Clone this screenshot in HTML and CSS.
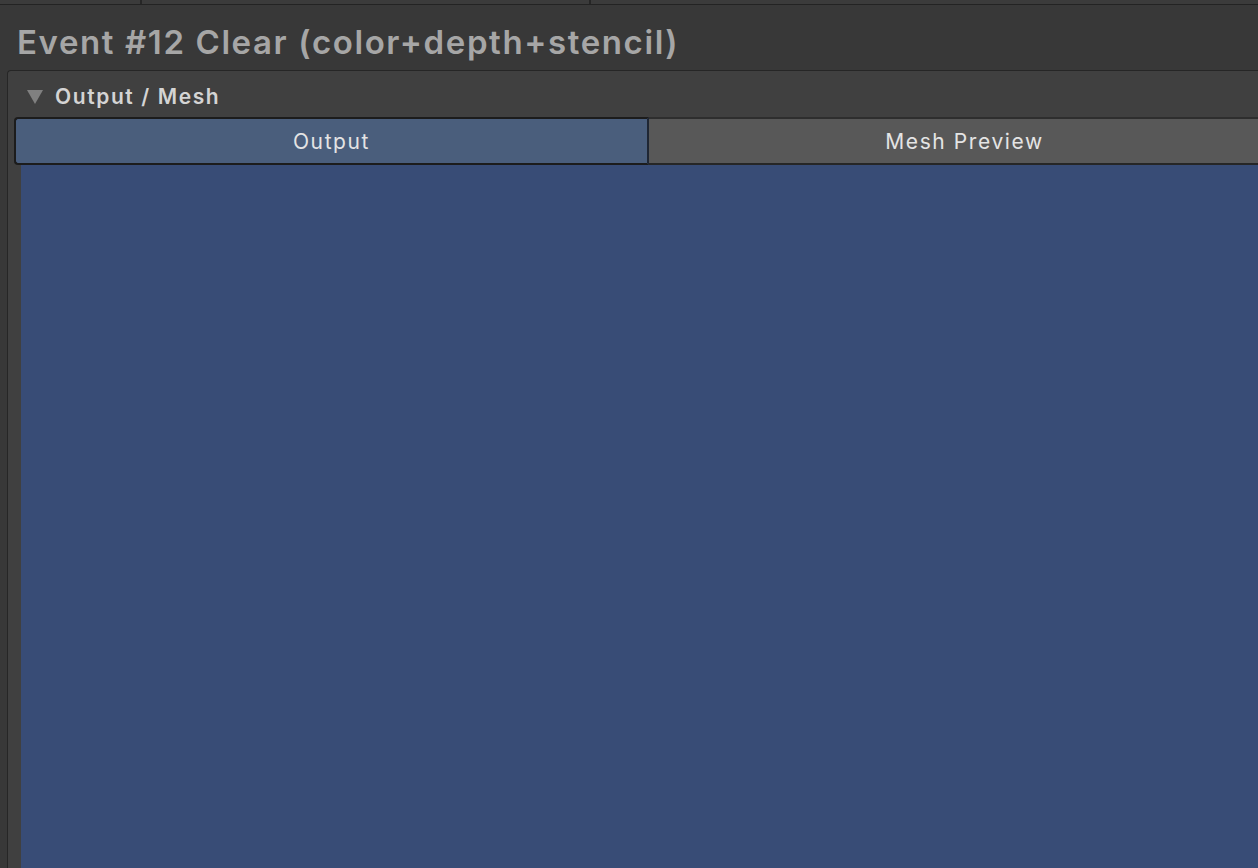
FILE: index.html
```html
<!DOCTYPE html>
<html>
<head>
<meta charset="utf-8">
<link rel="stylesheet" href="styles.css">
</head>
<body>
<div class="topbar">
  <div class="toptab t1"></div>
  <div class="toptab t2"></div>
  <div class="toptab t3"></div>
</div>
<h1 class="title">Event #12 Clear (color+depth+stencil)</h1>
<section class="panel">
  <div class="foldout">
    <svg class="arrow" width="18" height="16" viewBox="0 0 18 16"><polygon points="1,1 17,1 9,15" fill="#808080"/></svg>
    <span class="foldout-label">Output / Mesh</span>
  </div>
  <div class="tabs">
    <div class="tab active">Output</div>
    <div class="tab">Mesh Preview</div>
  </div>
  <div class="view-wrap">
    <div class="view"></div>
  </div>
</section>
</body>
</html>
```
FILE: styles.css
```css
html, body {
  margin: 0;
  padding: 0;
  height: 100%;
  overflow: hidden;
  background: #383838;
  font-family: Inter, "Noto Sans", sans-serif;
}
body {
  display: flex;
  flex-direction: column;
}
.topbar {
  height: 4px;
  flex: 0 0 auto;
  display: flex;
  background: #3b3b3b;
  border-bottom: 1px solid #232323;
}
.toptab {
  height: 100%;
}
.t1 { width: 140px; border-right: 2px solid #262626; }
.t2 { width: 447px; border-right: 2px solid #262626; }
.t3 { flex: 1; }
.title {
  margin: 0;
  padding: 17px 0 0 17px;
  height: 48px;
  box-sizing: content-box;
  font-size: 33px;
  font-weight: 600;
  letter-spacing: 1.6px;
  line-height: 40px;
  color: #a6a6a6;
  white-space: nowrap;
  flex: 0 0 auto;
}
.panel {
  flex: 1;
  margin-left: 7px;
  margin-right: -22px;
  background: #404040;
  border-top: 1px solid #262626;
  border-left: 1px solid #262626;
  border-top-left-radius: 4px;
  display: flex;
  flex-direction: column;
  min-height: 0;
}
.foldout {
  height: 46px;
  display: flex;
  align-items: center;
  padding-left: 18px;
  padding-top: 4px;
  box-sizing: border-box;
  flex: 0 0 auto;
}
.arrow {
  display: block;
  margin-right: 11px;
  margin-top: 2px;
}
.foldout-label {
  font-size: 21px;
  font-weight: 600;
  letter-spacing: 1.6px;
  color: #d4d4d4;
}
.tabs {
  display: flex;
  height: 48px;
  margin-left: 6px;
  flex: 0 0 auto;
}
.tab {
  flex: 1;
  display: flex;
  align-items: center;
  justify-content: center;
  font-size: 21px;
  letter-spacing: 1.6px;
  color: #e4e4e4;
  background: #585858;
  border-top: 2px solid #2e2e2e;
  border-bottom: 2px solid #262626;
  box-sizing: border-box;
}
.tab.active {
  background: #4a5e7c;
  border: 2px solid #1c1c1c;
  border-radius: 4px 0 0 4px;
  border-right: 2px solid #1f2633;
}
.view-wrap {
  flex: 1;
  padding-left: 13px;
  display: flex;
}
.view {
  flex: 1;
  background: #384c76;
}
```
